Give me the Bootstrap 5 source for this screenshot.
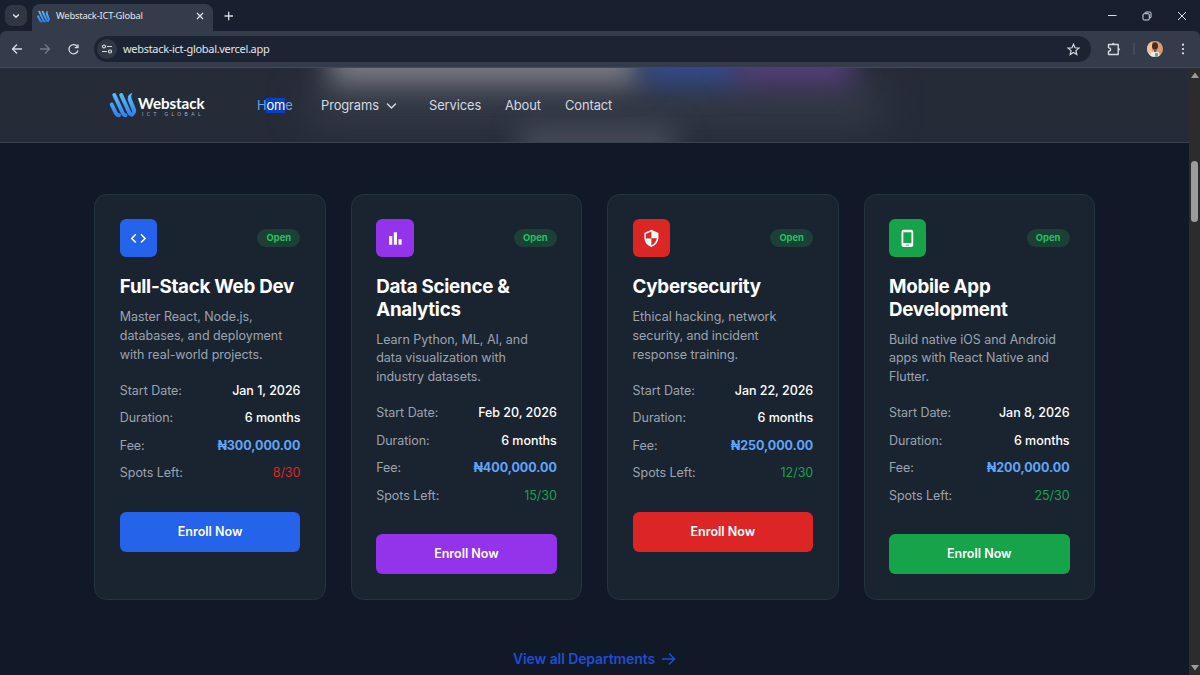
<!DOCTYPE html>
<html lang="en">
<head>
<meta charset="utf-8">
<title>Webstack-ICT-Global</title>
<link href="https://cdn.jsdelivr.net/npm/bootstrap@5.3.0/dist/css/bootstrap.min.css" rel="stylesheet">
<style>
body{width:1200px;height:675px;overflow:hidden;background:#111827;font-family:Inter,"Liberation Sans",sans-serif;font-size:12.5px;line-height:18.75px;color:#fff}
svg{display:block;flex:none}
.browser-ui{font-family:"Noto Sans","Open Sans",sans-serif;color:#e3e6ec}
.tabstrip{height:31px;background:#182030}
.tab-search{width:22px;height:21px;border-radius:7px;background:#2f3644;margin:5px 0 0 5px}
.tab-item{width:181px;height:27px;margin:4px 0 0 5px;border-radius:8px 8px 0 0;background:#343b4a;font-size:9.4px;padding:0 9px 3px 5px}
.toolbar{height:37px;background:#343b4a;border-bottom:1px solid #444b58;border-radius:6px 6px 0 0}
.toolbar-bg{background:#182030}
.omnibox{width:997px;height:26px;border-radius:13px;background:#1c2433;font-size:11px;margin-left:14px}
.site-chip{width:20px;height:20px;border-radius:50%;background:#303846;margin-left:3px}
.viewport-area{width:1189px;height:607px}
.site-nav{height:75px;background:#262b38;border-bottom:1px solid #3a4250}
.glow{position:absolute;filter:blur(14px)}
.nav-inner{height:74px;padding-left:109px}
.nav-inner a{color:#d6dae0;font-size:12.9px;letter-spacing:-.1px;text-decoration:none;padding-top:2px}
.brand-main{font:700 15.2px/16px Lato,sans-serif;color:#fff;letter-spacing:-.1px;padding-top:2px}
.brand-sub{font:400 4.8px/6px Lato,sans-serif;color:#aab0ba;letter-spacing:3.5px;padding-left:4px}
.sel{background:#0a3fc0;color:#fff;padding:0}
.course-grid{width:1000.5px;margin:51px auto 0 94.4px;display:grid;grid-template-columns:repeat(4,231.4px);gap:25px;height:406px}
.course{border:1px solid #22343f;border-radius:12.5px;background:#1a2431;padding:24.4px}
.tile{width:37.5px;height:37.5px;border-radius:6.25px}
.status{background:#1c4035;color:#22c55e;font-size:9.4px;font-weight:700;line-height:18px;border-radius:9px;width:43px;text-align:center;margin-top:-1px}
.course h3{font-size:18.75px;line-height:22.6px;font-weight:700;margin:19.6px 0 8.9px;letter-spacing:-.27px}
.desc{color:#9ca3af;margin:0 0 16.9px;line-height:18.9px;letter-spacing:-.04px}
.facts{display:grid;gap:8.75px;color:#9ca3af;margin-bottom:29px;letter-spacing:-.04px}
.facts b{font-weight:500;color:#fff}
.facts .fee{font-weight:700;color:#60a5fa}
.enroll{height:40px;border-radius:6.25px;font-size:12.5px;font-weight:600;color:#fff;padding:0;border:0;line-height:40px}
.c-blue{background:#2563eb}.c-purple{background:#9333ea}.c-red{background:#dc2626}.c-green{background:#16a34a}
.t-red{color:#dc2626}.t-green{color:#16a34a}
.view-all{color:#1d4ed8;font-size:14px;font-weight:600;letter-spacing:-.1px;margin-top:50px}
.scroll-rail{width:11px;background:#2c2c2c}
.thumb{width:7px;height:61px;border-radius:4px;background:#9c9c9c;margin-top:82px}
</style>
</head>
<body>
<svg width="0" height="0" class="position-absolute"><defs>
<linearGradient id="lg" gradientUnits="userSpaceOnUse" x1="0" y1="0" x2="0" y2="26"><stop offset="0" stop-color="#5cc3f5"/><stop offset="1" stop-color="#2b7df0"/></linearGradient>
<symbol id="wave" viewBox="0 0 27 26"><g fill="none" stroke="url(#lg)" stroke-width="4" stroke-linecap="round"><path d="M2.200 12.500L6 20.500Q7.500 23.500 9.500 23.200"/><path d="M4.800 3L13 20.500Q14.300 23.300 16 23.300"/><path d="M11.700 3L19.500 20Q20.800 23 22.500 22.500"/></g><path fill="url(#lg)" d="M23 .800Q17.500 2.500 18.300 8L22 17.500Q24 22 21.500 24.500Q28.500 22.500 26 16L22.500 7.500Q20.800 3.500 23 .800z"/></symbol>
</defs></svg>

<header class="browser-ui">
  <div class="tabstrip d-flex">
    <div class="tab-search d-flex align-items-center justify-content-center"><svg width="8" height="6" viewBox="0 0 8 6" fill="none" stroke="#e3e6ec" stroke-width="1.400"><path d="M1.200 1.500L4 4.300 6.800 1.500"/></svg></div>
    <div class="tab-item d-flex align-items-center">
      <svg width="13" height="13"><use href="#wave"/></svg>
      <span class="flex-grow-1 text-nowrap" style="padding-left:6px;letter-spacing:-.2px">Webstack-ICT-Global</span>
      <svg width="8" height="8" viewBox="0 0 8 8" stroke="#e3e6ec" stroke-width="1.200"><path d="M1 1l6 6M7 1L1 7"/></svg>
    </div>
    <svg class="mt-2 ms-2" width="16" height="16" viewBox="0 0 16 16" stroke="#d7dbe2" stroke-width="1.300"><path d="M3.500 8H12M7.700 3.700v8.500"/></svg>
    <div class="ms-auto d-flex align-items-center" style="padding-right:13px;gap:25px">
      <svg width="10" height="10" viewBox="0 0 10 10" stroke="#d7dbe2"><path d="M1 4.500h8.500"/></svg>
      <svg width="10" height="10" viewBox="0 0 10 10" fill="none" stroke="#d7dbe2"><rect x="1" y="2.700" width="6.300" height="6.300" rx="1.200"/><path d="M3 2.500V1.800Q3.200 1 4 1H7.800Q9 1 9 2.200V6Q9 7 7.700 7.200"/></svg>
      <svg width="10" height="10" viewBox="0 0 10 10" stroke="#e3e6ec"><path d="M1 1l8 8M9 1L1 9"/></svg>
    </div>
  </div>
  <div class="toolbar-bg"><div class="toolbar d-flex align-items-center">
    <svg style="margin-left:11px" width="12" height="12" viewBox="0 0 12 12" fill="none" stroke="#d7dbe2" stroke-width="1.300"><path d="M11 6H1.800M6 1.500L1.500 6 6 10.500"/></svg>
    <svg style="margin-left:16px" width="12" height="12" viewBox="0 0 12 12" fill="none" stroke="#737a87" stroke-width="1.300"><path d="M1 6h9.200M6 1.500L10.500 6 6 10.500"/></svg>
    <svg style="margin-left:16px" width="13" height="13" viewBox="0 0 13 13" fill="none" stroke="#d7dbe2" stroke-width="1.300"><path d="M10.300 3.500A4.600 4.600 0 1 0 11 7.500M11 1.500V4.700H7.700"/></svg>
    <div class="omnibox d-flex align-items-center">
      <div class="site-chip d-flex align-items-center justify-content-center"><svg width="12" height="10" viewBox="0 0 12 10" fill="none" stroke="#d7dbe2" stroke-width="1.200"><circle cx="3" cy="2.500" r="1.500"/><path d="M6 2.500h5M1 7.500h5"/><circle cx="9" cy="7.500" r="1.500"/></svg></div>
      <span class="text-nowrap" style="margin-left:6px;padding-top:1px;letter-spacing:-.3px">webstack-ict-global.vercel.app</span>
      <svg class="ms-auto" style="margin-right:11px" width="13" height="13" viewBox="0 0 13 13" fill="none" stroke="#d7dbe2" stroke-width="1.200"><path d="M6.500 1.200L8 4.800l3.900.300-3 2.500.9 3.800-3.300-2-3.300 2 .9-3.800-3-2.500L5 4.800z"/></svg>
    </div>
    <svg style="margin-left:16px" width="14" height="14" viewBox="0 0 14 14" fill="none" stroke="#d7dbe2" stroke-width="1.400" stroke-linejoin="round"><path d="M1.500 2.500H11.200V12.500H1.500V9.500Q3.700 9 3.700 7.500T1.500 5.500Z"/><path d="M5 2.200Q6.300.300 7.700 2.200M11.500 6Q13.700 7.400 11.500 8.800" fill="#d7dbe2" stroke-width="1"/></svg>
    <svg style="margin-left:12px" width="2" height="12"><path d="M1 0v12" stroke="#535b69"/></svg>
    <svg style="margin-left:12px" width="16" height="16" viewBox="0 0 16 16"><clipPath id="av"><circle cx="8" cy="8" r="8"/></clipPath><g clip-path="url(#av)"><path fill="#d99b75" d="M0 0h16v16H0z"/><path fill="#edc29d" d="M0 0h5v16H0z"/><ellipse cx="8" cy="5" rx="3" ry="3.800" fill="#4a2b20"/><path fill="#e7edf2" d="M3 16q0-6 5-6t5 6z"/><path fill="#78a679" d="M8 12h3v4H8z"/><path fill="#875039" d="M7 8h2.500v3H7z"/></g></svg>
    <svg style="margin-left:18px" width="4" height="12" viewBox="0 0 4 12" fill="#e3e6ec"><circle cx="2" cy="1.700" r="1.100"/><circle cx="2" cy="6" r="1.100"/><circle cx="2" cy="10.300" r="1.100"/></svg>
  </div></div>
</header>

<div class="d-flex">
<main class="viewport-area overflow-hidden">
  <nav class="site-nav position-relative overflow-hidden">
    <div class="glow" style="left:310px;top:14px;width:570px;height:44px;background:#343a47;filter:blur(18px)"></div>
    <div class="glow" style="left:330px;top:-22px;width:310px;height:38px;background:#80808a"></div>
    <div class="glow" style="left:642px;top:-22px;width:100px;height:38px;background:#364e94"></div>
    <div class="glow" style="left:735px;top:-22px;width:118px;height:38px;background:#58407e"></div>
    <div class="glow" style="left:520px;top:60px;width:155px;height:30px;background:#4b505c"></div>
    <div class="nav-inner d-flex align-items-center position-relative">
      <svg width="28" height="26"><use href="#wave"/></svg>
      <div style="margin-left:1px;width:119px"><div class="brand-main">Webstack</div><div class="brand-sub text-nowrap">ICT GLOBAL</div></div>
      <a href="#" style="color:#60a5fa;width:64px">H<span class="sel">om</span>e</a>
      <a href="#" class="d-flex align-items-center" style="width:108px">Programs<svg style="margin-left:7px" width="11" height="8" viewBox="0 0 11 8" fill="none" stroke="#d6dae0" stroke-width="1.500" stroke-linecap="round"><path d="M1.500 2l4 4 4-4"/></svg></a>
      <a href="#" style="width:76px">Services</a><a href="#" style="width:60px">About</a><a href="#">Contact</a>
    </div>
  </nav>

  <section class="course-grid">
    <article class="course">
      <div class="d-flex align-items-center justify-content-between">
        <div class="tile c-blue d-flex align-items-center justify-content-center"><svg width="18.750" height="18.750" viewBox="0 0 24 24" fill="#fff"><path d="M9.400 16.600L4.800 12l4.600-4.600L8 6l-6 6 6 6 1.400-1.400zm5.200 0l4.600-4.600-4.600-4.600L16 6l6 6-6 6-1.400-1.400z"/></svg></div>
        <span class="status">Open</span>
      </div>
      <h3>Full-Stack Web Dev</h3>
      <p class="desc">Master React, Node.js,<br>databases, and deployment<br>with real-world projects.</p>
      <div class="facts">
        <div class="d-flex justify-content-between"><span>Start Date:</span><b>Jan 1, 2026</b></div>
        <div class="d-flex justify-content-between"><span>Duration:</span><b>6 months</b></div>
        <div class="d-flex justify-content-between"><span>Fee:</span><b class="fee">₦300,000.00</b></div>
        <div class="d-flex justify-content-between"><span>Spots Left:</span><span class="t-red">8/30</span></div>
      </div>
      <button class="btn enroll c-blue w-100">Enroll Now</button>
    </article>
    <article class="course">
      <div class="d-flex align-items-center justify-content-between">
        <div class="tile c-purple d-flex align-items-center justify-content-center"><svg width="18.750" height="18.750" viewBox="0 0 24 24" fill="#fff"><path d="M4 9h4v11H4zm12 4h4v7h-4zm-6-9h4v16h-4z"/></svg></div>
        <span class="status">Open</span>
      </div>
      <h3>Data Science &amp;<br>Analytics</h3>
      <p class="desc">Learn Python, ML, AI, and<br>data visualization with<br>industry datasets.</p>
      <div class="facts">
        <div class="d-flex justify-content-between"><span>Start Date:</span><b>Feb 20, 2026</b></div>
        <div class="d-flex justify-content-between"><span>Duration:</span><b>6 months</b></div>
        <div class="d-flex justify-content-between"><span>Fee:</span><b class="fee">₦400,000.00</b></div>
        <div class="d-flex justify-content-between"><span>Spots Left:</span><span class="t-green">15/30</span></div>
      </div>
      <button class="btn enroll c-purple w-100">Enroll Now</button>
    </article>
    <article class="course">
      <div class="d-flex align-items-center justify-content-between">
        <div class="tile c-red d-flex align-items-center justify-content-center"><svg width="18.750" height="18.750" viewBox="0 0 24 24" fill="#fff"><path d="M12 1L3 5v6c0 5.550 3.840 10.740 9 12 5.160-1.260 9-6.450 9-12V5l-9-4zm0 10.990h7c-.530 4.120-3.280 7.790-7 8.940V12H5V6.300l7-3.110v8.800z"/></svg></div>
        <span class="status">Open</span>
      </div>
      <h3>Cybersecurity</h3>
      <p class="desc">Ethical hacking, network<br>security, and incident<br>response training.</p>
      <div class="facts">
        <div class="d-flex justify-content-between"><span>Start Date:</span><b>Jan 22, 2026</b></div>
        <div class="d-flex justify-content-between"><span>Duration:</span><b>6 months</b></div>
        <div class="d-flex justify-content-between"><span>Fee:</span><b class="fee">₦250,000.00</b></div>
        <div class="d-flex justify-content-between"><span>Spots Left:</span><span class="t-green">12/30</span></div>
      </div>
      <button class="btn enroll c-red w-100">Enroll Now</button>
    </article>
    <article class="course">
      <div class="d-flex align-items-center justify-content-between">
        <div class="tile c-green d-flex align-items-center justify-content-center"><svg width="18.750" height="18.750" viewBox="0 0 24 24" fill="#fff"><path fill-rule="evenodd" d="M7 1h10q2.500 0 2.500 2.500v17Q19.500 23 17 23H7q-2.500 0-2.500-2.500v-17Q4.500 1 7 1zM6.800 4v14h10.400V4zM10 20v1h4v-1z"/></svg></div>
        <span class="status">Open</span>
      </div>
      <h3>Mobile App<br>Development</h3>
      <p class="desc">Build native iOS and Android<br>apps with React Native and<br>Flutter.</p>
      <div class="facts">
        <div class="d-flex justify-content-between"><span>Start Date:</span><b>Jan 8, 2026</b></div>
        <div class="d-flex justify-content-between"><span>Duration:</span><b>6 months</b></div>
        <div class="d-flex justify-content-between"><span>Fee:</span><b class="fee">₦200,000.00</b></div>
        <div class="d-flex justify-content-between"><span>Spots Left:</span><span class="t-green">25/30</span></div>
      </div>
      <button class="btn enroll c-green w-100">Enroll Now</button>
    </article>
  </section>
  <div class="view-all d-flex justify-content-center align-items-center">View all Departments<svg style="margin-left:6px" width="15" height="14" viewBox="0 0 15 14" fill="none" stroke="#1d4ed8" stroke-width="1.500"><path d="M1 7h12M8 1.500L13.500 7 8 12.500"/></svg></div>
</main>
<aside class="scroll-rail d-flex flex-column align-items-center justify-content-between pt-1">
  <svg width="8" height="7" fill="#9c9c9c"><path d="M0 6L4 .500 8 6z"/></svg>
  <div class="thumb mb-auto"></div>
  <svg class="mb-1" width="8" height="7" fill="#9c9c9c"><path d="M0 1L4 6.500 8 1z"/></svg>
</aside>
</div>
<script src="https://cdn.jsdelivr.net/npm/bootstrap@5.3.0/dist/js/bootstrap.bundle.min.js"></script>
</body>
</html>
